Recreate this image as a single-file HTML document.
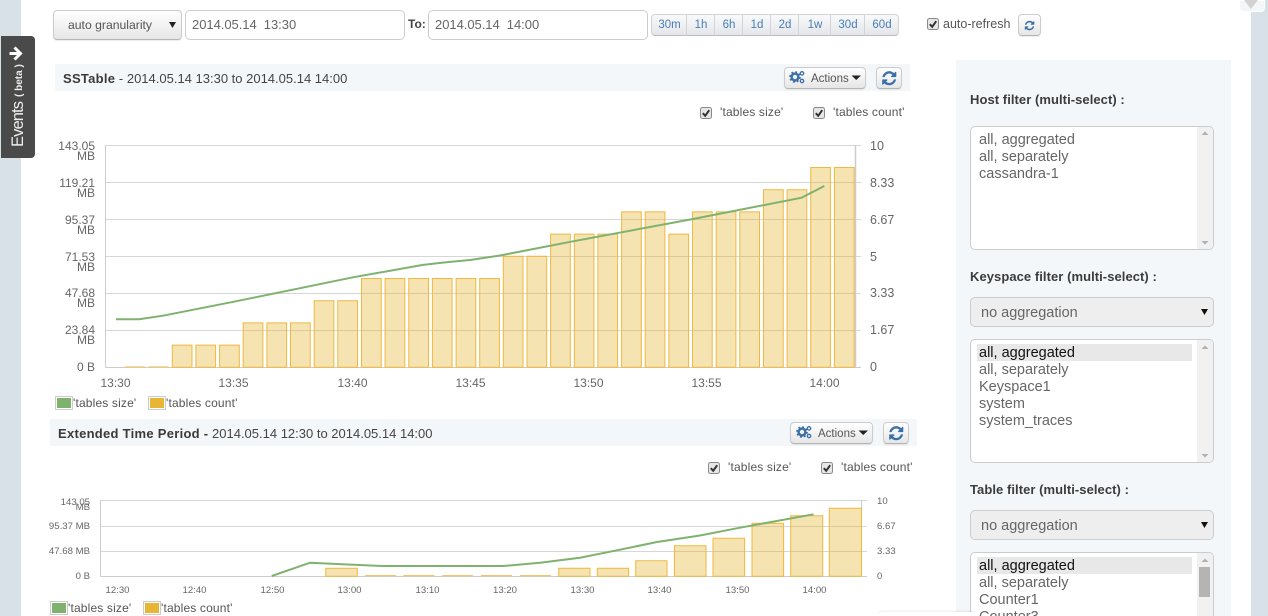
<!DOCTYPE html>
<html><head><meta charset="utf-8"><title>SSTable</title>
<style>
html,body{margin:0;padding:0;width:1268px;height:616px;overflow:hidden;background:#d9e1e8;font-family:"Liberation Sans",sans-serif;color:#555}
#root{position:relative;width:1268px;height:616px;overflow:hidden;background:#d9e1e8}
.a{position:absolute;box-sizing:border-box;white-space:nowrap}
#wrap{position:absolute;left:21px;top:0;width:1230px;height:616px;background:#fff}
.btn{background:linear-gradient(#fff,#e6e6e6);border:1px solid #ccc;border-bottom-color:#b5b5b5;border-radius:4px;box-shadow:0 1px 1px rgba(0,0,0,.08)}
.inp{background:#fff;border:1px solid #ccc;border-radius:5px;font-size:13px;line-height:28px;padding-left:6px;color:#666;height:30px;width:220px;top:10px;letter-spacing:-.04px}
.rg{top:14px;height:22px;font-size:11.5px;line-height:21px;text-align:center;padding-left:1px;color:#4a7db5;background:linear-gradient(#f9fafb,#e3e6e9);border:1px solid #d4d4d4;border-bottom-color:#bbb}
.head{background:#f4f7fa;font-size:13px;color:#444;line-height:29px;height:27px}
.head b{color:#3a3a3a;letter-spacing:.28px}
.l12{font-size:12px;color:#555;line-height:14px;letter-spacing:.16px}
.lab{font-size:13px;font-weight:bold;color:#3c3c3c;left:970px;line-height:18px;letter-spacing:.06px}
.list{left:970px;width:244px;background:#fff;border:1px solid #ccc;border-radius:5px;overflow:hidden}
.sb{position:absolute;right:0;top:0;bottom:0;width:16px;background:#f1f1f1}
.opt{position:absolute;left:8px;font-size:14.5px;line-height:17px;color:#666;margin-top:1px}
.sel{left:970px;width:244px;height:30px;background:#eee;border:1px solid #ccc;border-radius:5px;font-size:14.5px;line-height:30px;padding-left:10px;color:#666}
.hl{position:absolute;left:6px;width:215px;height:17px;background:#e8e8e8}
svg{position:absolute;overflow:visible}
svg text{font-family:"Liberation Sans",sans-serif;fill:#666}
</style></head><body>
<div id="root">
<div id="wrap"></div>

<!-- top-right widget -->
<div class="a" style="left:1239px;top:0;width:26px;height:12px;background:#f4f7fa;border:1px solid #fff;border-radius:0 0 4px 4px"></div>
<svg style="left:0;top:0" width="1268" height="616"><path d="M1244 0h14l-7 9z" fill="#d2d2d2"/></svg>

<!-- events tab -->
<div class="a" style="left:1px;top:36px;width:34px;height:122px;background:#4a4a4a;border-radius:0 4px 4px 0"></div>
<svg style="left:0;top:0" width="60" height="170">
<path d="M9.5 53.5h9M14.5 47.5l6 6-6 6" fill="none" stroke="#fff" stroke-width="3"/>
<text transform="translate(23 147) rotate(-90)" font-size="16.5" style="fill:#eee" textLength="46">Events</text>
<text transform="translate(22 97) rotate(-90)" font-size="10" font-weight="bold" style="fill:#eee" xml:space="preserve">( beta )</text>
</svg>

<!-- toolbar -->
<div class="a btn" style="left:53px;top:10px;width:129px;height:30px;font-size:12.2px;line-height:28px;padding-left:14px;color:#555">auto granularity</div>
<svg style="left:0;top:0" width="10" height="10"><path d="M169 22h7l-3.5 6z" fill="#222"/></svg>
<div class="a inp" style="left:185px">2014.05.14&nbsp;&nbsp;13:30</div>
<div class="a" style="left:408px;top:16px;font-size:12px;font-weight:bold;color:#444;line-height:16px">To:</div>
<div class="a inp" style="left:428px">2014.05.14&nbsp;&nbsp;14:00</div>
<div class="a rg" style="left:651px;width:36px;border-radius:4px 0 0 4px">30m</div>
<div class="a rg" style="left:687px;width:28px;border-left:0">1h</div>
<div class="a rg" style="left:715px;width:28px;border-left:0">6h</div>
<div class="a rg" style="left:743px;width:28px;border-left:0">1d</div>
<div class="a rg" style="left:771px;width:28px;border-left:0">2d</div>
<div class="a rg" style="left:799px;width:32px;border-left:0">1w</div>
<div class="a rg" style="left:831px;width:34px;border-left:0">30d</div>
<div class="a rg" style="left:865px;width:34px;border-left:0;border-radius:0 4px 4px 0">60d</div>
<div class="a" style="left:943px;top:16px;font-size:12.5px;line-height:16px;color:#555">auto-refresh</div>
<div class="a btn" style="left:1018px;top:14px;width:23px;height:22px"></div>

<!-- panel headers -->
<div class="a head" style="left:55px;top:64px;width:855px;padding-left:8px"><b>SSTable</b> - 2014.05.14 13:30 to 2014.05.14 14:00</div>
<div class="a btn" style="left:784px;top:67px;width:82px;height:22px;font-size:11.5px;line-height:23px;padding-left:26px;color:#555">Actions</div>
<div class="a btn" style="left:876px;top:67px;width:26px;height:22px"></div>
<div class="a l12" style="left:720px;top:105px">'tables size'</div>
<div class="a l12" style="left:833px;top:105px">'tables count'</div>

<div class="a head" style="left:50px;top:419px;width:867px;padding-left:8px"><b>Extended Time Period -</b> 2014.05.14 12:30 to 2014.05.14 14:00</div>
<div class="a btn" style="left:790px;top:422px;width:83px;height:22px;font-size:11.5px;line-height:23px;padding-left:27px;color:#555">Actions</div>
<div class="a btn" style="left:883px;top:422px;width:26px;height:22px"></div>
<div class="a l12" style="left:728px;top:460px">'tables size'</div>
<div class="a l12" style="left:841px;top:460px">'tables count'</div>

<!-- legends -->
<div class="a" style="left:55px;top:396px;width:18px;height:14px;border:1px solid #ccc;padding:1px"><div style="background:#7fb26f;height:100%"></div></div>
<div class="a l12" style="left:73px;top:396px">'tables size'</div>
<div class="a" style="left:148px;top:396px;width:18px;height:14px;border:1px solid #ccc;padding:1px"><div style="background:#e8b634;height:100%"></div></div>
<div class="a l12" style="left:166px;top:396px">'tables count'</div>
<div class="a" style="left:50px;top:601px;width:18px;height:14px;border:1px solid #ccc;padding:1px"><div style="background:#7fb26f;height:100%"></div></div>
<div class="a l12" style="left:68px;top:601px">'tables size'</div>
<div class="a" style="left:143px;top:601px;width:18px;height:14px;border:1px solid #ccc;padding:1px"><div style="background:#e8b634;height:100%"></div></div>
<div class="a l12" style="left:161px;top:601px">'tables count'</div>

<!-- charts and icons -->
<svg style="left:0;top:0" width="1268" height="616">
<defs>
<path id="rf" d="M1639 1056q0 5-1 7-64 268-268 434.5t-478 166.5q-146 0-282.5-55t-243.5-157l-129 129q-19 19-45 19t-45-19-19-45v-448q0-26 19-45t45-19h448q26 0 45 19t19 45-19 45l-137 137q71 66 161 102t187 36q134 0 250-65t186-179q11-17 53-117 8-23 30-23h192q13 0 22.5 9.5t9.5 22.5zm25-800v448q0 26-19 45t-45 19h-448q-26 0-45-19t-19-45 19-45l138-138q-148-137-349-137-134 0-250 65t-186 179q-11 17-53 117-8 23-30 23h-199q-13 0-22.5-9.5t-9.5-22.5v-7q65-268 270-434.5t480-166.5q146 0 284 55.5t245 156.5l130-129q19-19 45-19t45 19 19 45z"/>
<g id="gears" fill="none" stroke="#3b6fa8">
<circle cx="5" cy="6" r="3.4" stroke-width="2.4"/>
<circle cx="5" cy="6" r="5" stroke-width="1.6" stroke-dasharray="2 1.93"/>
<circle cx="12" cy="2.4" r="1.7" stroke-width="1.3"/>
<circle cx="12" cy="10" r="1.7" stroke-width="1.3"/>
</g>
<g id="cb">
<rect x=".5" y=".5" width="11" height="11" rx="2" fill="#e6e6e6" stroke="#8a8a8a"/>
<path d="M2.8 6.2l2.4 2.6 4-5.6" fill="none" stroke="#333" stroke-width="2"/>
</g>
</defs>

<use href="#cb" x="700" y="107"/><use href="#cb" x="813" y="107"/>
<use href="#cb" x="708" y="462"/><use href="#cb" x="821" y="462"/>
<use href="#cb" x="927" y="18"/>

<use href="#gears" x="790" y="71"/>
<use href="#gears" x="797" y="426"/>
<path d="M851.5 75.5h9.500l-4.750 4.500z" fill="#222"/>
<path d="M858.5 430.500h9.500l-4.750 4.500z" fill="#222"/>
<use href="#rf" transform="translate(881 70) scale(.0092)" fill="#3b6fa8"/>
<use href="#rf" transform="translate(888 425) scale(.0092)" fill="#3b6fa8"/>
<use href="#rf" transform="translate(1024 20) scale(.0062)" fill="#3b6fa8"/>

<!-- chart 1 -->
<g stroke="#d6d6d6" fill="none">
<path d="M105.5 145.5H861M105.5 182.5H861M105.5 219.5H861M105.5 256.5H861M105.5 293.5H861M105.5 330.5H861"/>
<path d="M105.5 145v222.5" stroke="#ccc"/>
<path d="M855.5 145v222.5" stroke="#ccc" stroke-width="1.5"/>
<path d="M105.5 367.5H861" stroke="#ccc"/>
</g>
<path d="M172.3 345.1h19.7V367.3h-19.7zM195.9 345.1h19.7V367.3h-19.7zM219.6 345.1h19.7V367.3h-19.7zM243.2 322.9h19.7V367.3h-19.7zM266.9 322.9h19.7V367.3h-19.7zM290.5 322.9h19.7V367.3h-19.7zM314.2 300.7h19.7V367.3h-19.7zM337.8 300.7h19.7V367.3h-19.7zM361.5 278.5h19.7V367.3h-19.7zM385.1 278.5h19.7V367.3h-19.7zM408.8 278.5h19.7V367.3h-19.7zM432.4 278.5h19.7V367.3h-19.7zM456.1 278.5h19.7V367.3h-19.7zM479.7 278.5h19.7V367.3h-19.7zM503.3 256.3h19.7V367.3h-19.7zM527 256.3h19.7V367.3h-19.7zM550.6 234.1h19.7V367.3h-19.7zM574.3 234.1h19.7V367.3h-19.7zM597.9 234.1h19.7V367.3h-19.7zM621.6 211.9h19.7V367.3h-19.7zM645.2 211.9h19.7V367.3h-19.7zM668.9 234.1h19.7V367.3h-19.7zM692.5 211.9h19.7V367.3h-19.7zM716.2 211.9h19.7V367.3h-19.7zM739.8 211.9h19.7V367.3h-19.7zM763.5 189.7h19.7V367.3h-19.7zM787.1 189.7h19.7V367.3h-19.7zM810.7 167.5h19.7V367.3h-19.7zM834.4 167.5h19.7V367.3h-19.7z" fill="rgba(232,182,52,.38)" stroke="#eeb93e" stroke-width="1"/>
<path d="M125 367h20M148.6 367h20" stroke="#efc76a" stroke-width="1.2"/>
<polyline points="116,319.3 139,319.3 163,315.7 234,301.7 353,277.3 423,264.9 445,262.4 470,260 500,255.5 573,241.3 693,219 801.7,197.7 824.3,186" fill="none" stroke="#7fb26f" stroke-width="2"/>
<g font-size="12" text-anchor="end">
<text x="95" y="150">143.05</text><text x="95" y="160">MB</text>
<text x="95" y="187">119.21</text><text x="95" y="197">MB</text>
<text x="95" y="224">95.37</text><text x="95" y="234">MB</text>
<text x="95" y="261">71.53</text><text x="95" y="271">MB</text>
<text x="95" y="297">47.68</text><text x="95" y="307">MB</text>
<text x="95" y="334">23.84</text><text x="95" y="344">MB</text>
<text x="95" y="371">0 B</text>
</g>
<g font-size="12.5">
<text x="870" y="150">10</text><text x="870" y="187">8.33</text><text x="870" y="224">6.67</text><text x="870" y="261">5</text><text x="870" y="297">3.33</text><text x="870" y="334">1.67</text><text x="870" y="371">0</text>
</g>
<g font-size="12" text-anchor="middle">
<text x="115.5" y="387">13:30</text><text x="233.5" y="387">13:35</text><text x="352.5" y="387">13:40</text><text x="470.5" y="387">13:45</text><text x="588.5" y="387">13:50</text><text x="706.5" y="387">13:55</text><text x="824.5" y="387">14:00</text>
</g>

<!-- chart 2 -->
<g stroke="#d6d6d6" fill="none">
<path d="M100.5 500.5H867M100.5 526.5H867M100.5 551.5H867"/>
<path d="M100.5 500v76.5M861.5 500v76.5" stroke="#ccc"/>
<path d="M100.5 576.5H867" stroke="#ccc"/>
</g>
<path d="M325.7 568.3h31.6V576.3h-31.6zM558.7 568.3h31.3V576.3h-31.3zM597.3 568.3h31.3V576.3h-31.3zM635.7 560.7h31.3V576.3h-31.3zM674.4 545.7h31.6V576.3h-31.6zM713 538.3h31.6V576.3h-31.6zM752 523.3h31.6V576.3h-31.6zM790.7 515.7h32V576.3h-32zM829.3 508.3h32.2V576.3h-32.2z" fill="rgba(232,182,52,.38)" stroke="#eeb93e"/>
<path d="M365 575.6h31M403.3 575.6h31M442 575.6h31M481 575.6h31M520 575.6h31" stroke="#efc76a" stroke-width="1.2"/>
<polyline points="271.7,576 310,562.7 345,564.4 383,566 503.3,566 540,562.7 580,557.7 620,549.7 657,542 700,535.5 740,527.7 813.5,514.3" fill="none" stroke="#7fb26f" stroke-width="2"/>
<g font-size="9.6" text-anchor="end">
<text x="90" y="505">143.05</text><text x="90" y="510">MB</text>
<text x="90" y="529">95.37 MB</text><text x="90" y="554">47.68 MB</text><text x="90" y="579">0 B</text>
</g>
<g font-size="9.6">
<text x="877" y="504">10</text><text x="877" y="529">6.67</text><text x="877" y="554">3.33</text><text x="877" y="579">0</text>
</g>
<g font-size="9.6" text-anchor="middle">
<text x="117.5" y="593">12:30</text><text x="194.5" y="593">12:40</text><text x="272.5" y="593">12:50</text><text x="349.5" y="593">13:00</text><text x="427.5" y="593">13:10</text><text x="505" y="593">13:20</text><text x="582.5" y="593">13:30</text><text x="659.5" y="593">13:40</text><text x="737.5" y="593">13:50</text><text x="814.5" y="593">14:00</text>
</g>
</svg>

<!-- right panel -->
<div class="a" style="left:956px;top:60px;width:275px;height:556px;background:#f4f7fa"></div>
<div class="a lab" style="top:91px">Host filter (multi-select) :</div>
<div class="a list" style="top:126px;height:124px">
<div class="sb"></div>
<div class="opt" style="top:4px">all, aggregated</div><div class="opt" style="top:21px">all, separately</div><div class="opt" style="top:38px">cassandra-1</div>
</div>
<div class="a lab" style="top:268px">Keyspace filter (multi-select) :</div>
<div class="a sel" style="top:297px">no aggregation</div>
<div class="a list" style="top:339px;height:124px">
<div class="sb"></div><div class="hl" style="top:4px"></div>
<div class="opt" style="top:4px;color:#111">all, aggregated</div><div class="opt" style="top:21px">all, separately</div><div class="opt" style="top:38px">Keyspace1</div><div class="opt" style="top:55px">system</div><div class="opt" style="top:72px">system_traces</div>
</div>
<div class="a lab" style="top:481px">Table filter (multi-select) :</div>
<div class="a sel" style="top:510px">no aggregation</div>
<div class="a list" style="top:552px;height:80px">
<div class="sb"></div><div class="hl" style="top:4px"></div>
<div style="position:absolute;left:228px;top:14px;width:11px;height:30px;background:#b4b4b4"></div>
<div class="opt" style="top:4px;color:#111">all, aggregated</div><div class="opt" style="top:21px">all, separately</div><div class="opt" style="top:38px">Counter1</div><div class="opt" style="top:55px">Counter3</div>
</div>
<svg style="left:0;top:0" width="1268" height="616">
<g fill="#b0b0b0">
<path d="M1201.5 135l3.5-3.5 3.5 3.5zM1201.5 241l3.5 3.5 3.5-3.5z"/>
<path d="M1201.5 349l3.5-3.5 3.5 3.5zM1201.5 454l3.5 3.5 3.5-3.5z"/>
<path d="M1201.5 562l3.5-3.5 3.5 3.5z"/>
</g>
<path d="M1201 309h7l-3.5 6zM1201 522h7l-3.5 6z" fill="#111"/>
</svg>
<div class="a" style="left:878px;top:612px;width:96px;height:4px;background:#fff;border-radius:6px 0 0 0;box-shadow:0 -1px 2px rgba(0,0,0,.08)"></div>
</div>
</body></html>
